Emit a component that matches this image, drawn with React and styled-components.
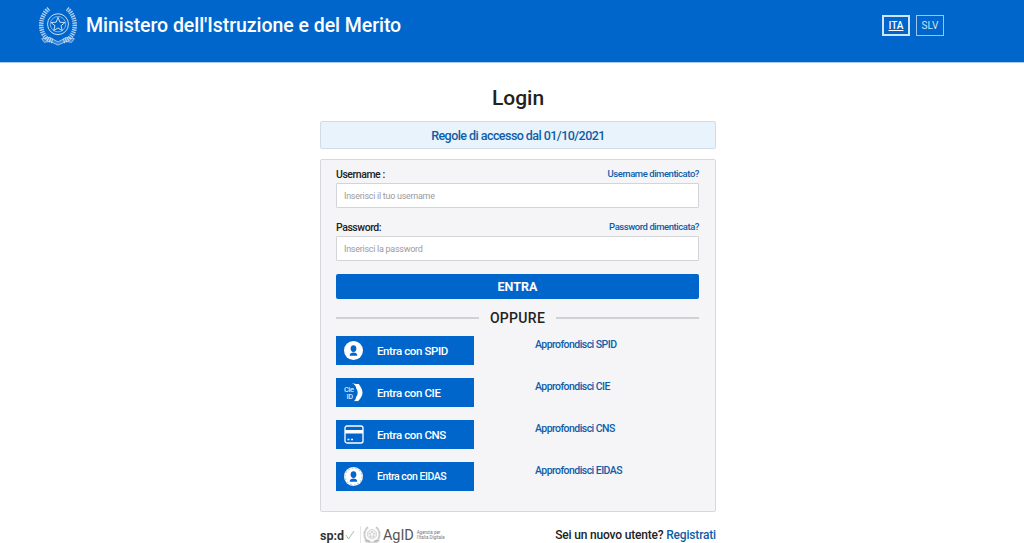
import React from 'react';
import styled, { createGlobalStyle } from 'styled-components';

const GlobalStyle = createGlobalStyle`
  html, body { margin: 0; padding: 0; height: 100%; overflow: hidden; background: #fff; }
  body { font-family: Roboto, "Noto Sans", "Liberation Sans", sans-serif; color: #222; }
  * { box-sizing: border-box; }
`;

const Header = styled.header`
  height: 63px; background: #0066cc; border-bottom: 1px solid #a9cdf0;
  display: flex; align-items: flex-start; justify-content: space-between;
  padding: 4px 80px 0 38px;
`;
const Brand = styled.div`
  display: flex; align-items: center; gap: 8px; height: 44px;
`;
const BrandName = styled.span`
  font-size: 19.5px; font-weight: 500; color: #fff; white-space: nowrap; letter-spacing: -0.05px;
  margin-top: -1px;
`;
const LangList = styled.div`
  display: flex; gap: 6px; padding-top: 11px;
`;
const Lang = styled.a`
  width: 28px; height: 21px; display: flex; align-items: center; justify-content: center;
  font-size: 10px; color: ${p => (p.$active ? '#fff' : '#cfe2f6')};
  font-weight: ${p => (p.$active ? 500 : 400)};
  text-decoration: ${p => (p.$active ? 'underline' : 'none')};
  border: ${p => (p.$active ? '2px solid #cfe4f8' : '1px solid #9cc4ec')};
`;

const Main = styled.main`
  width: 396px; margin: 0 auto 0 320px; display: flex; flex-direction: column;
`;
const Title = styled.h1`
  margin: 20px 0 0; height: 38px; line-height: 31px; text-align: center;
  font-size: 21px; font-weight: 500; color: #222;
`;
const Notice = styled.div`
  height: 28px; background: #e9f3fb; border: 1px solid #cfdde9; border-radius: 2px;
  display: flex; align-items: center; justify-content: center;
  font-size: 12.5px; font-weight: 500; color: #0f5da8; letter-spacing: -0.55px;
`;
const Panel = styled.section`
  margin-top: 10px; height: 353px; background: #f5f5f8; border: 1px solid #d6d8dc; border-radius: 2px;
  padding: 5px 16px 0 15px; display: flex; flex-direction: column;
`;
const FieldHead = styled.div`
  height: 18px; display: flex; align-items: center; justify-content: space-between;
`;
const Label = styled.label`
  font-size: 10.5px; font-weight: 500; color: #222; letter-spacing: -0.45px;
`;
const SmallLink = styled.a`
  font-size: 9.5px; font-weight: 500; color: #0f5da8; position: relative; top: -1px; letter-spacing: -0.45px;
`;
const Input = styled.input`
  display: block; width: 100%; height: 25px; margin: 0 0 10px; padding: 0 7px;
  background: #fff; border: 1px solid #d2d4d8; border-radius: 1px;
  font-family: inherit; font-size: 9px; letter-spacing: -0.28px;
  &::placeholder { color: #9a9a9f; opacity: 1; }
`;
const Submit = styled.button`
  height: 25px; margin-top: 3px; width: 100%; background: #0066cc; border: 0; border-radius: 2px;
  font-family: inherit; font-size: 12.5px; font-weight: 700; color: #fff;
`;
const Divider = styled.div`
  height: 38px; display: flex; align-items: center; gap: 11px;
  font-size: 14px; font-weight: 500; color: #222; letter-spacing: 0.3px;
  &::before, &::after { content: ''; flex: 1; height: 1.5px; background: #cfd1d5; }
`;
const IdpList = styled.div`
  display: flex; flex-direction: column; gap: 13px; margin-top: -1px;
`;
const IdpRow = styled.div`
  display: flex; align-items: flex-start; gap: 61px;
`;
const IdpButton = styled.a`
  width: 138px; height: 29px; background: #0066cc; color: #fff; display: flex; align-items: center;
  font-size: ${p => (p.$small ? '10.5px' : '11.5px')}; font-weight: 500;
  letter-spacing: ${p => (p.$small ? '-0.45px' : '-0.4px')};
`;
const IdpIcon = styled.span`
  width: 41px; height: 100%; padding-right: 6px; display: flex; align-items: center; justify-content: center;
`;
const IdpLink = styled.a`
  font-size: 10.5px; font-weight: 500; color: #0f5da8; position: relative; top: 2px; line-height: 14px;
  letter-spacing: -0.55px;
`;

const Footer = styled.footer`
  height: 30px; margin-top: 8px; display: flex; align-items: center; justify-content: space-between;
`;
const Logos = styled.div`
  display: flex; align-items: center;
`;
const SpidMark = styled.span`
  display: flex; align-items: center; gap: 1px; width: 41px; font-size: 12.5px; font-weight: 700; color: #333;
  border-right: 1px solid #e6e6e6; height: 18px; margin-right: 2px;
`;
const AgidName = styled.span`
  font-size: 14.5px; font-weight: 400; color: #555; margin: 0 3px 0 2px; letter-spacing: -0.1px;
`;
const AgidText = styled.span`
  font-size: 4.5px; line-height: 5px; color: #777; white-space: pre-line;
`;
const SignUp = styled.div`
  font-size: 12px; font-weight: 500; color: #222; letter-spacing: -0.18px;
  a { color: #0f5da8; }
`;

const Emblem = ({ width, height, color }) => (
  <svg width={width} height={height} viewBox="0 0 44 44" fill="none" stroke={color}>
    <circle cx="22" cy="20" r="11.500" strokeWidth="1" />
    <circle cx="22" cy="20" r="8.500" strokeWidth="0.6" />
    <path d="M22 12.500l2 5.300 5.600.4-4.300 3.500 1.400 5.400-4.700-3-4.700 3 1.400-5.400-4.300-3.500 5.600-.4z" strokeWidth="1" />
    <path d="M12 3C4 9 1 22 6 31c2.500 4.500 6 6.500 10 7.500M32 3c8 6 11 19 6 28-2.500 4.500-6 6.500-10 7.500" strokeWidth="5" strokeDasharray="1.500 1" strokeOpacity="0.8" />
    <path d="M4 36l9-1.500 9 5 9-5 9 1.500-3 4-6-1-9 4-9-4-6 1z" strokeWidth="0.7" fill={color} fillOpacity="0.25" />
  </svg>
);

const PersonIcon = ({ speckled }) => (
  <svg width="19" height="19" viewBox="0 0 20 20">
    <circle cx="10" cy="10" r="10" fill="#fff" />
    {speckled && <circle cx="10" cy="10" r="9" fill="none" stroke="#b8d2ec" strokeWidth="1.500" strokeDasharray="2 2" />}
    <ellipse cx="10" cy="8" rx="3" ry="3.600" fill="#0066cc" />
    <path d="M6 15.500c0-2.300 1.800-3.400 4-3.400s4 1.100 4 3.400z" fill="#0066cc" />
  </svg>
);

const CieIcon = () => (
  <svg width="19" height="21" viewBox="0 0 19 21">
    <path d="M8 1c2.300 1 4.500 1.300 6.800.9 2.100 2.900 3.700 5.700 3.700 8.600s-1.500 5.800-4.500 8.700c-1.500-.3-3-.2-4.500.3 1.800-1.500 2.500-3 2.500-4.500 2.200-2 2.200-6 .2-8.500.1-2-1.400-4-4.200-5.500z" fill="#fff" />
    <text x="0" y="10" fontSize="7.500" fill="#d5e6f7" fontFamily="Roboto, sans-serif">Cie</text>
    <text x="2.500" y="17" fontSize="7.500" fill="#d5e6f7" fontFamily="Roboto, sans-serif">ID</text>
  </svg>
);

const CardIcon = () => (
  <svg width="20" height="19" viewBox="0 0 20 19" fill="none">
    <rect x="1" y="1" width="18" height="17" rx="2" stroke="#fff" strokeWidth="1.300" />
    <rect x="1" y="5" width="18" height="3.500" fill="#fff" />
    <path d="M3.500 14.500h2M7 14.500h2" stroke="#fff" strokeWidth="1.300" />
  </svg>
);

const providers = [
  { name: 'SPID', icon: <PersonIcon /> },
  { name: 'CIE', icon: <CieIcon /> },
  { name: 'CNS', icon: <CardIcon /> },
  { name: 'EIDAS', icon: <PersonIcon speckled />, small: true },
];

export default function App() {
  return (
    <>
      <GlobalStyle />
      <Header>
        <Brand>
          <Emblem width={40} height={44} color="#dcebf9" />
          <BrandName>Ministero dell'Istruzione e del Merito</BrandName>
        </Brand>
        <LangList>
          <Lang $active>ITA</Lang>
          <Lang>SLV</Lang>
        </LangList>
      </Header>
      <Main>
        <Title>Login</Title>
        <Notice>Regole di accesso dal 01/10/2021</Notice>
        <Panel>
          <FieldHead>
            <Label>Username :</Label>
            <SmallLink>Username dimenticato?</SmallLink>
          </FieldHead>
          <Input placeholder="Inserisci il tuo username" />
          <FieldHead>
            <Label>Password:</Label>
            <SmallLink>Password dimenticata?</SmallLink>
          </FieldHead>
          <Input placeholder="Inserisci la password" />
          <Submit>ENTRA</Submit>
          <Divider>OPPURE</Divider>
          <IdpList>
            {providers.map(p => (
              <IdpRow key={p.name}>
                <IdpButton $small={p.small}>
                  <IdpIcon>{p.icon}</IdpIcon>
                  Entra con {p.name}
                </IdpButton>
                <IdpLink>Approfondisci {p.name}</IdpLink>
              </IdpRow>
            ))}
          </IdpList>
        </Panel>
        <Footer>
          <Logos>
            <SpidMark>
              sp:d
              <svg width="10" height="10" viewBox="0 0 10 10" fill="none">
                <path d="M1 5l2.500 4L9 1" stroke="#8fb08f" strokeWidth="0.8" />
              </svg>
            </SpidMark>
            <Emblem width={18} height={18} color="#999" />
            <AgidName>AgID</AgidName>
            <AgidText>{'Agenzia per\nl\'Italia Digitale'}</AgidText>
          </Logos>
          <SignUp>Sei un nuovo utente? <a>Registrati</a></SignUp>
        </Footer>
      </Main>
    </>
  );
}
